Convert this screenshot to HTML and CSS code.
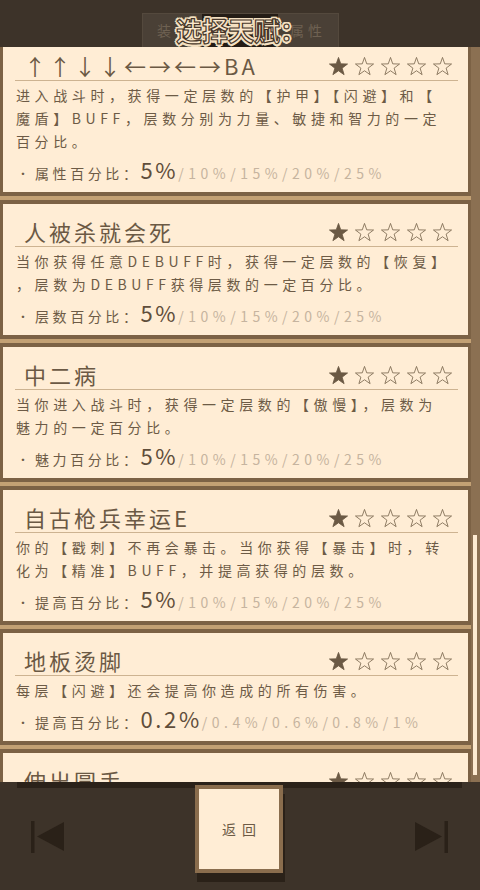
FILE: index.html
```html
<!DOCTYPE html>
<html lang="zh-CN">
<head>
<meta charset="utf-8">
<title>选择天赋</title>
<link rel="stylesheet" href="styles.css">
</head>
<body>
<svg class="sprite" width="0" height="0" aria-hidden="true">
  <symbol id="star" viewBox="-1 -1 22 21">
    <polygon points="10,0.5 12.35,7.26 19.51,7.41 13.8,11.74 15.88,18.59 10,14.5 4.12,18.59 6.2,11.74 0.49,7.41 7.65,7.26"/>
  </symbol>
</svg>
<div class="screen">
  <header class="top">
    <div class="tabs">
      <span class="tab">装备</span>
      <span class="tab tab-on"></span>
      <span class="tab">属性</span>
    </div>
    <h1 class="title">选择天赋：</h1>
  </header>

  <main class="viewport">
    <div class="list">
      <article class="card">
        <div class="card-head">
          <span class="name">↑↑↓↓←→←→BA</span>
          <span class="stars"><svg class="on"><use href="#star"/></svg><svg><use href="#star"/></svg><svg><use href="#star"/></svg><svg><use href="#star"/></svg><svg><use href="#star"/></svg></span>
        </div>
        <p class="desc">
          <span>进入战斗时，获得一定层数的【护甲】【闪避】和【</span>
          <span>魔盾】BUFF，层数分别为力量、敏捷和智力的一定</span>
          <span>百分比。</span>
        </p>
        <div class="stat"><span class="dot">·</span>属性百分比：<span class="cur">5%</span><span class="next">/10%/15%/20%/25%</span></div>
      </article>

      <article class="card">
        <div class="card-head">
          <span class="name">人被杀就会死</span>
          <span class="stars"><svg class="on"><use href="#star"/></svg><svg><use href="#star"/></svg><svg><use href="#star"/></svg><svg><use href="#star"/></svg><svg><use href="#star"/></svg></span>
        </div>
        <p class="desc">
          <span>当你获得任意DEBUFF时，获得一定层数的【恢复】</span>
          <span>，层数为DEBUFF获得层数的一定百分比。</span>
        </p>
        <div class="stat"><span class="dot">·</span>层数百分比：<span class="cur">5%</span><span class="next">/10%/15%/20%/25%</span></div>
      </article>

      <article class="card">
        <div class="card-head">
          <span class="name">中二病</span>
          <span class="stars"><svg class="on"><use href="#star"/></svg><svg><use href="#star"/></svg><svg><use href="#star"/></svg><svg><use href="#star"/></svg><svg><use href="#star"/></svg></span>
        </div>
        <p class="desc">
          <span>当你进入战斗时，获得一定层数的【傲慢】，层数为</span>
          <span>魅力的一定百分比。</span>
        </p>
        <div class="stat"><span class="dot">·</span>魅力百分比：<span class="cur">5%</span><span class="next">/10%/15%/20%/25%</span></div>
      </article>

      <article class="card">
        <div class="card-head">
          <span class="name">自古枪兵幸运E</span>
          <span class="stars"><svg class="on"><use href="#star"/></svg><svg><use href="#star"/></svg><svg><use href="#star"/></svg><svg><use href="#star"/></svg><svg><use href="#star"/></svg></span>
        </div>
        <p class="desc">
          <span>你的【戳刺】不再会暴击。当你获得【暴击】时，转</span>
          <span>化为【精准】BUFF，并提高获得的层数。</span>
        </p>
        <div class="stat"><span class="dot">·</span>提高百分比：<span class="cur">5%</span><span class="next">/10%/15%/20%/25%</span></div>
      </article>

      <article class="card">
        <div class="card-head">
          <span class="name">地板烫脚</span>
          <span class="stars"><svg class="on"><use href="#star"/></svg><svg><use href="#star"/></svg><svg><use href="#star"/></svg><svg><use href="#star"/></svg><svg><use href="#star"/></svg></span>
        </div>
        <p class="desc">
          <span>每层【闪避】还会提高你造成的所有伤害。</span>
        </p>
        <div class="stat"><span class="dot">·</span>提高百分比：<span class="cur">0.2%</span><span class="next">/0.4%/0.6%/0.8%/1%</span></div>
      </article>

      <article class="card">
        <div class="card-head">
          <span class="name">伸出圆手</span>
          <span class="stars"><svg class="on"><use href="#star"/></svg><svg><use href="#star"/></svg><svg><use href="#star"/></svg><svg><use href="#star"/></svg><svg><use href="#star"/></svg></span>
        </div>
      </article>
    </div>
    <div class="scrollbar"><div class="thumb"></div></div>
  </main>

  <footer class="bottom">
    <div class="shade"></div>
    <div class="controls">
      <button class="nav" aria-label="上一页">
        <svg width="34" height="32" viewBox="0 0 34 32"><rect x="0" y="0" width="3.5" height="32" fill="#2a2118"/><polygon points="6,15.5 33,1 33,30" fill="#2a2118"/></svg>
      </button>
      <button class="back">返回</button>
      <button class="nav" aria-label="下一页">
        <svg width="34" height="32" viewBox="0 0 34 32"><polygon points="27,15.5 0,1 0,30" fill="#2a2118"/><rect x="29.5" y="0" width="3.5" height="32" fill="#2a2118"/></svg>
      </button>
    </div>
  </footer>
</div>
</body>
</html>
```

FILE: styles.css
```css
* {
  box-sizing: border-box;
}

html, body {
  margin: 0;
  padding: 0;
  background: #3d3329;
}

body {
  font-family: "Noto Sans CJK SC", "Noto Sans", sans-serif;
  color: #6d5b46;
}

.sprite {
  position: absolute;
  width: 0;
  height: 0;
}

.screen {
  width: 480px;
  height: 890px;
  display: flex;
  flex-direction: column;
  overflow: hidden;
  background: #3d3329;
}

/* ---- header ---- */
.top {
  position: relative;
  height: 47px;
  flex: none;
  padding-top: 13px;
  display: flex;
  justify-content: center;
  z-index: 2;
  background: #3d3329;
}

.tabs {
  width: 197px;
  height: 34px;
  margin-left: 1px;
  display: flex;
  background: #4a4036;
  border: 1px solid #54493d;
  border-bottom: 0;
}

.tab {
  flex: 1 1 0;
  font-size: 14px;
  line-height: 33px;
  letter-spacing: 4px;
  color: #6e6152;
  text-align: center;
}

.tab:first-child {
  flex: 0 0 59px;
  text-align: left;
  padding-left: 14px;
}

.tab-on {
  flex: 0 0 76px;
  background: #241c15;
}

.tab:last-child {
  text-align: right;
  padding-right: 12px;
}

.title {
  position: absolute;
  left: 176px;
  top: 12px;
  margin: 0;
  font-size: 26px;
  line-height: 36px;
  font-weight: 700;
  color: #fbe8cc;
  -webkit-text-stroke: 1.2px #47372a;
  text-shadow:
    2.5px 0 0 #f4e0c1, -2.5px 0 0 #f4e0c1, 0 2.5px 0 #f4e0c1, 0 -2.5px 0 #f4e0c1,
    1.8px 1.8px 0 #f4e0c1, -1.8px 1.8px 0 #f4e0c1, 1.8px -1.8px 0 #f4e0c1, -1.8px -1.8px 0 #f4e0c1;
}

/* ---- list ---- */
.viewport {
  flex: 1 1 auto;
  display: flex;
  overflow: hidden;
  background: #8b7052;
}

.list {
  width: 471px;
  flex: none;
  margin-top: -13px;
  background: #c3a174;
  align-self: flex-start;
}

.card {
  background: #ffedd5;
  border: 4px solid #7c6245;
  border-left-width: 3px;
  border-right-width: 3px;
  margin-bottom: 4px;
  padding: 12px 10px 10px 12px;
}

.card-head {
  height: 31px;
  display: flex;
  align-items: center;
  justify-content: space-between;
  border-bottom: 1px solid #cdb391;
  padding-right: 5px;
}

.name {
  padding-left: 9px;
  font-size: 22px;
  line-height: 30px;
  letter-spacing: 3px;
  color: #6b5944;
  white-space: nowrap;
}

.stars {
  display: flex;
  gap: 5px;
  margin-top: 1px;
}

.stars svg {
  width: 21px;
  height: 20px;
  fill: none;
  stroke: #7d6a52;
  stroke-width: 0.9;
}

.stars svg.on {
  fill: #6b5944;
  stroke: #6b5944;
}

.desc {
  margin: 3px 0 0;
  padding-left: 1px;
  font-size: 14px;
  line-height: 23px;
  letter-spacing: 4.6px;
  color: #6d5b46;
}

.desc span {
  display: block;
  white-space: nowrap;
}

.stat {
  margin-top: 3px;
  padding-left: 6px;
  height: 26px;
  font-size: 14px;
  line-height: 26px;
  letter-spacing: 3.6px;
  color: #6d5b46;
  white-space: nowrap;
}

.dot {
  font-family: "Noto Sans", sans-serif;
  font-weight: 700;
  letter-spacing: 0;
  margin-right: 10px;
}

.cur {
  font-size: 22px;
  letter-spacing: 2.6px;
  color: #5f4e3b;
}

.next {
  letter-spacing: 4.5px;
  color: #c6b49f;
}

.scrollbar {
  flex: 1 1 auto;
  position: relative;
  background: #8b7052;
}

.thumb {
  position: absolute;
  left: 2px;
  width: 4px;
  top: 488px;
  height: 240px;
  background: #fdebd2;
}

/* ---- bottom bar ---- */
.bottom {
  position: relative;
  height: 108px;
  flex: none;
  background: #3d3329;
  z-index: 2;
}

.shade {
  height: 6px;
  margin: 0 18px 0 17px;
  background: #2b2219;
}

.controls {
  position: absolute;
  left: 0;
  right: 0;
  top: 3px;
  display: grid;
  grid-template-columns: 1fr 88px 1fr;
  align-items: start;
}

.nav {
  border: 0;
  background: none;
  padding: 0;
  width: 34px;
  height: 32px;
  margin-top: 36px;
  justify-self: start;
  margin-left: 31px;
  display: block;
}

.nav:last-child {
  justify-self: end;
  margin-left: 0;
  margin-right: 31px;
}

.nav svg {
  display: block;
}

.back {
  width: 88px;
  height: 88px;
  margin-left: -1px;
  background: #ffedd5;
  border: 4px solid #8a6d4d;
  box-shadow: 2px 9px 0 #2a2118;
  font-family: "Noto Sans CJK SC", sans-serif;
  font-size: 14px;
  letter-spacing: 6px;
  padding: 0 0 0 6px;
  color: #6d5b46;
}
```
